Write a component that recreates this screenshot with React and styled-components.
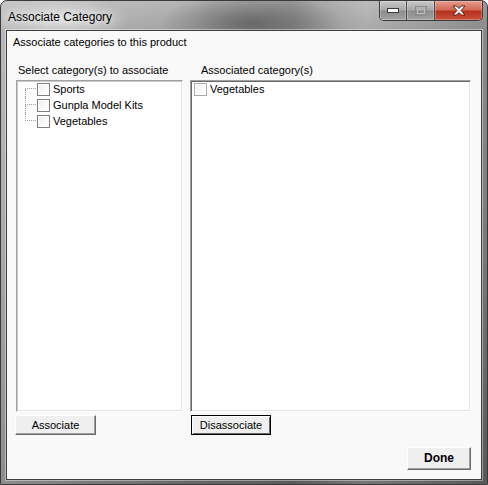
import styled, { createGlobalStyle } from "styled-components";

const GlobalStyle = createGlobalStyle`
  html, body {
    margin: 0;
    padding: 0;
    background: #ffffff;
  }
`;

const Window = styled.div`
  width: 488px;
  height: 485px;
  box-sizing: border-box;
  display: flex;
  flex-direction: column;
  padding: 0 5px 4px 5px;
  border: 1px solid #3a3a3a;
  border-radius: 7px 7px 0 0;
  background:
    radial-gradient(ellipse 70px 22px at 60px 18px, rgba(235, 235, 235, 0.75), rgba(235, 235, 235, 0) 100%),
    radial-gradient(ellipse 90px 30px at 250px 22px, rgba(70, 70, 70, 0.6), rgba(70, 70, 70, 0) 100%),
    linear-gradient(to right, rgba(255, 255, 255, 0.25), rgba(255, 255, 255, 0) 40%, rgba(0, 0, 0, 0.12) 60%, rgba(255, 255, 255, 0.1) 75%, rgba(0, 0, 0, 0.14)),
    linear-gradient(to bottom, #b4b4b4 0px, #a0a0a0 30px, #939393 200px, #666666 485px);
`;

const TitleBar = styled.div`
  height: 29px;
  display: flex;
  justify-content: space-between;
  align-items: flex-start;
  flex: none;
`;

const Title = styled.div`
  font-family: "Liberation Sans", Arial, sans-serif;
  font-size: 12px;
  color: #000;
  margin: 9px 0 0 2px;
  line-height: 14px;
  text-shadow: 0 0 6px rgba(255, 255, 255, 0.9), 0 0 10px rgba(255, 255, 255, 0.7);
`;

const CaptionGroup = styled.div`
  display: flex;
  margin-right: -1px;
  border: 1px solid #3c3c3c;
  border-top: none;
  border-radius: 0 0 5px 5px;
  overflow: hidden;
  height: 19px;
`;

const CaptionButton = styled.div`
  width: ${(p) => p.$w}px;
  height: 19px;
  display: flex;
  align-items: center;
  justify-content: center;
  border-left: ${(p) => (p.$first ? "none" : "1px solid #4a4a4a")};
  box-shadow: inset 0 0 0 1px rgba(255, 255, 255, 0.25);
  background: ${(p) =>
    p.$close
      ? "linear-gradient(to bottom, #e59b8c 0%, #d46b58 45%, #b8321e 55%, #c9503a 100%)"
      : "linear-gradient(to bottom, #c8c8c8 0%, #a9a9a9 45%, #8d8d8d 55%, #a2a2a2 100%)"};
`;

const Glyph = styled.svg`
  display: block;
`;

const Client = styled.div`
  flex: 1;
  display: flex;
  flex-direction: column;
  background: #f9f9f9;
  border: 1px solid #3f3f3f;
  box-shadow: 0 0 0 1px rgba(255, 255, 255, 0.4);
  padding: 0 10px 0 9px;
  font-family: "Liberation Sans", Arial, sans-serif;
  font-size: 11px;
  color: #000;
`;

const Heading = styled.div`
  line-height: 14px;
  margin: 4px 0 0 -3px;
`;

const Columns = styled.div`
  display: grid;
  grid-template-columns: 167px 281px;
  grid-template-rows: 14px 332px 20px;
  column-gap: 7px;
  row-gap: 3px;
  margin-top: 14px;
`;

const ColumnLabel = styled.div`
  line-height: 14px;
  padding-left: ${(p) => p.$indent}px;
`;

const SunkenBox = styled.div`
  box-sizing: border-box;
  background: #ffffff;
  border: 1px solid;
  border-color: #a0a0a0 #ffffff #ffffff #a0a0a0;
  box-shadow: inset 1px 1px 0 ${(p) => (p.$dark ? "#696969" : "#c8c8c8")}, inset -1px -1px 0 #e3e3e3;
  padding: ${(p) => (p.$tree ? "0 0 0 8px" : "0 0 0 3px")};
`;

const TreeRow = styled.div`
  display: flex;
  align-items: center;
  height: 16px;
`;

const Connector = styled.div`
  width: 11px;
  height: 16px;
  display: flex;
  flex-direction: column;
  flex: none;
`;

const ConnectorTop = styled.div`
  height: 7px;
  border-left: 1px dotted ${(p) => (p.$show ? "#a0a0a0" : "transparent")};
  border-bottom: 1px dotted #a0a0a0;
`;

const ConnectorBottom = styled.div`
  height: 8px;
  border-left: 1px dotted ${(p) => (p.$show ? "#a0a0a0" : "transparent")};
`;

const Check = styled.span`
  box-sizing: border-box;
  width: 13px;
  height: 13px;
  flex: none;
  margin-left: ${(p) => p.$ml}px;
  border: 1px solid ${(p) => (p.$dark ? "#7f7f7f" : "#a9a9a9")};
  background: linear-gradient(135deg, #f0f0f0, #ffffff);
  box-shadow: inset 0 0 0 1px #ffffff;
`;

const ItemText = styled.span`
  margin-left: ${(p) => p.$ml}px;
  line-height: 14px;
  white-space: nowrap;
`;

const ListRow = styled.div`
  display: flex;
  align-items: center;
  height: 14px;
  margin-top: 1px;
`;

const ButtonSlot = styled.div`
  display: flex;
  margin-left: ${(p) => p.$ml}px;
`;

const Button = styled.div`
  box-sizing: border-box;
  width: ${(p) => p.$w}px;
  height: ${(p) => p.$h}px;
  display: flex;
  align-items: center;
  justify-content: center;
  background: #efefef;
  font-weight: ${(p) => (p.$bold ? "bold" : "normal")};
  font-size: ${(p) => (p.$bold ? "12px" : "11px")};
  border: 1px solid;
  border-color: ${(p) => (p.$focused ? "#000" : "#ffffff #696969 #696969 #ffffff")};
  box-shadow: ${(p) =>
    p.$focused
      ? "inset 1px 1px 0 #ffffff, inset -1px -1px 0 #696969"
      : "inset -1px -1px 0 #a0a0a0"};
  padding-bottom: 1px;
`;

const Footer = styled.div`
  display: flex;
  justify-content: flex-end;
  margin-top: 12px;
`;

const treeItems = ["Sports", "Gunpla Model Kits", "Vegetables"];

export default function App() {
  return (
    <>
      <GlobalStyle />
      <Window>
        <TitleBar>
          <Title>Associate Category</Title>
          <CaptionGroup>
            <CaptionButton $w={26} $first>
              <Glyph width="12" height="6" viewBox="0 0 12 6">
                <rect x="0.5" y="0.5" width="11" height="4" fill="#fff" stroke="#3a3a3a" />
              </Glyph>
            </CaptionButton>
            <CaptionButton $w={27}>
              <Glyph width="12" height="10" viewBox="0 0 12 10">
                <rect x="0.5" y="0.5" width="11" height="9" fill="none" stroke="#8a8a8a" />
                <rect x="2.5" y="3.5" width="7" height="4" fill="none" stroke="#bcbcbc" />
              </Glyph>
            </CaptionButton>
            <CaptionButton $w={47} $close>
              <Glyph width="14" height="11" viewBox="0 0 14 11">
                <path
                  d="M1 1 L4.5 1 L7 3.5 L9.5 1 L13 1 L9 5.5 L13 10 L9.5 10 L7 7.5 L4.5 10 L1 10 L5 5.5 Z"
                  fill="#fff"
                  stroke="#4a1a10"
                  strokeWidth="0.9"
                  strokeLinejoin="round"
                />
              </Glyph>
            </CaptionButton>
          </CaptionGroup>
        </TitleBar>
        <Client>
          <Heading>Associate categories to this product</Heading>
          <Columns>
            <ColumnLabel $indent={2}>Select category(s) to associate</ColumnLabel>
            <ColumnLabel $indent={11}>Associated category(s)</ColumnLabel>
            <SunkenBox $tree>
              {treeItems.map((name, i) => (
                <TreeRow key={name}>
                  <Connector>
                    <ConnectorTop $show={i > 0} />
                    <ConnectorBottom $show={i < treeItems.length - 1} />
                  </Connector>
                  <Check $dark $ml={1} />
                  <ItemText $ml={3}>{name}</ItemText>
                </TreeRow>
              ))}
            </SunkenBox>
            <SunkenBox $dark>
              <ListRow>
                <Check $ml={0} />
                <ItemText $ml={3}>Vegetables</ItemText>
              </ListRow>
            </SunkenBox>
            <ButtonSlot $ml={-1}>
              <Button $w={81} $h={20}>Associate</Button>
            </ButtonSlot>
            <ButtonSlot $ml={1}>
              <Button $w={80} $h={20} $focused>Disassociate</Button>
            </ButtonSlot>
          </Columns>
          <Footer>
            <Button $w={64} $h={23} $bold>Done</Button>
          </Footer>
        </Client>
      </Window>
    </>
  );
}
